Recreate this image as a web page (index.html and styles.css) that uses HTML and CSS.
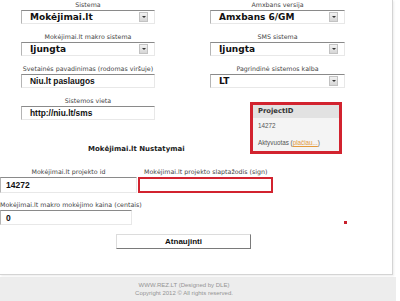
FILE: index.html
```html
<!DOCTYPE html>
<html lang="lt">
<head>
  <meta charset="UTF-8">
  <title>Mokėjimai.lt nustatymai</title>
  <link rel="stylesheet" href="styles.css">
</head>
<body>

  <div class="panel">
    <div class="settings">
      <div class="field">
        <div class="label">Sistema</div>
        <div class="select"><span>Mokėjimai.lt</span><i class="arrow"></i></div>
      </div>
      <div class="field">
        <div class="label">Amxbans versija</div>
        <div class="select"><span>Amxbans 6/GM</span><i class="arrow"></i></div>
      </div>

      <div class="field">
        <div class="label">Mokėjimai.lt makro sistema</div>
        <div class="select"><span>Įjungta</span><i class="arrow"></i></div>
      </div>
      <div class="field">
        <div class="label">SMS sistema</div>
        <div class="select"><span>Įjungta</span><i class="arrow"></i></div>
      </div>

      <div class="field">
        <div class="label">Svetainės pavadinimas (rodomas viršuje)</div>
        <div class="input">Niu.lt paslaugos</div>
      </div>
      <div class="field">
        <div class="label">Pagrindinė sistemos kalba</div>
        <div class="select"><span>LT</span><i class="arrow"></i></div>
      </div>

      <div class="field">
        <div class="label">Sistemos vieta</div>
        <div class="input">http://niu.lt/sms</div>
      </div>
      <div class="project">
        <div class="project-head">ProjectID</div>
        <p class="project-id">14272</p>
        <p class="project-state">Aktyvuotas (<a href="#">plačiau...</a>)</p>
      </div>

      <h3 class="heading">Mokėjimai.lt Nustatymai</h3>
    </div>

    <div class="mokejimai">
      <div class="field">
        <div class="label">Mokėjimai.lt projekto id</div>
        <div class="input tall">14272</div>
      </div>
      <div class="field">
        <div class="label left">Mokėjimai.lt projekto slaptažodis (sign)</div>
        <div class="input tall invalid"></div>
      </div>
      <div class="field">
        <div class="label flush">Mokėjimai.lt makro mokėjimo kaina (centais)</div>
        <div class="input short">0</div>
      </div>
    </div>

    <button class="submit">Atnaujinti</button>
    <span class="dot"></span>
  </div>

  <div class="footer">
    WWW.REZ.LT (Designed by DLE)<br>
    Copyright 2012 © All rights reserved.
  </div>

</body>
</html>
```

FILE: styles.css
```css
body {
  margin: 0;
  width: 400px;
  height: 301px;
  overflow: hidden;
  background: #fff;
  color: #333;
  font-family: "DejaVu Sans", Verdana, sans-serif;
}

.panel {
  position: relative;
  width: 393px;
  height: 275px;
  box-sizing: border-box;
  border-right: 1px solid #d4d4d4;
  border-bottom: 1px solid #d4d4d4;
  box-shadow: 1px 1px 2px rgba(0, 0, 0, 0.08);
}

.settings {
  display: grid;
  grid-template-columns: 134px 135px;
  column-gap: 55px;
  row-gap: 8px;
  padding-left: 21px;
}

.label {
  height: 10px;
  font-size: 6.3px;
  line-height: 10px;
  text-align: center;
  white-space: nowrap;
  color: #444;
}

.label.left {
  text-align: left;
  padding-left: 6px;
}

.label.flush {
  text-align: left;
}

.select, .input {
  box-sizing: border-box;
  height: 14px;
  display: flex;
  align-items: center;
  padding-left: 8px;
  border-top: 1px solid #8a8a8a;
  border-left: 1px solid #b4b4b4;
  border-right: 1px solid #e8e8e8;
  border-bottom: 1px solid #e8e8e8;
  background: #fff;
  color: #111;
  font-weight: bold;
  white-space: nowrap;
}

.select {
  font-size: 9px;
}

.select span {
  flex: 1;
}

.arrow {
  box-sizing: border-box;
  width: 9px;
  height: 10px;
  margin-right: 6px;
  display: flex;
  align-items: center;
  justify-content: center;
  background: linear-gradient(#f2f2f2, #d6d6d6);
  border: 1px solid #c2c2c2;
}

.arrow::after {
  content: "";
  border-top: 2px solid #333;
  border-left: 2px solid transparent;
  border-right: 2px solid transparent;
}

.input {
  font-family: "Liberation Sans", Arial, sans-serif;
  font-size: 8.4px;
}

.input.tall {
  height: 16px;
  padding-left: 5px;
  font-size: 8.5px;
}

.input.short {
  width: 132px;
  height: 15px;
  padding-left: 5px;
  font-size: 8.5px;
}

.input.invalid {
  border: 2px solid #d2232f;
}

.project {
  grid-column: 2;
  grid-row: 4 / span 2;
  box-sizing: border-box;
  width: 92px;
  height: 52px;
  margin: 6px 0 0 40px;
  border: 3px solid #d2232f;
  background: #f4f4f4;
  font-family: "Liberation Sans", Arial, sans-serif;
  font-size: 6.3px;
  color: #555;
}

.project-head {
  height: 13px;
  padding-left: 5px;
  background: #e2e2e2;
  font-family: "DejaVu Sans", Verdana, sans-serif;
  font-size: 6.8px;
  font-weight: bold;
  line-height: 13px;
  color: #333;
}

.project p {
  margin: 0;
  padding-left: 5px;
  line-height: 10px;
}

.project-id {
  padding-top: 3px;
}

.project-state {
  padding-top: 7px;
}

.project a {
  color: #e39a3a;
}

.heading {
  grid-column: 1 / -1;
  grid-row: 5;
  margin: 0 0 0 67px;
  padding-top: 16px;
  font-size: 7px;
  line-height: 10px;
  color: #222;
}

.mokejimai {
  display: grid;
  grid-template-columns: 137px 135px;
  column-gap: 1px;
  row-gap: 7px;
  margin-top: 13px;
}

.submit {
  display: block;
  box-sizing: border-box;
  width: 135px;
  height: 15px;
  margin: 9px 0 0 116px;
  padding: 0;
  background: #fff;
  border: 1px solid;
  border-color: #dcdcdc #7a7a7a #7a7a7a #dcdcdc;
  font-family: "Liberation Sans", Arial, sans-serif;
  font-size: 8px;
  font-weight: bold;
  color: #111;
}

.dot {
  position: absolute;
  left: 344px;
  top: 221px;
  width: 3px;
  height: 3px;
  background: #c8202c;
}

.footer {
  width: 396px;
  height: 24px;
  margin-top: 2px;
  box-sizing: border-box;
  padding: 4px 28px 0 0;
  background: #ededed;
  text-align: center;
  font-family: "Liberation Sans", Arial, sans-serif;
  font-size: 6px;
  line-height: 8px;
  color: #949494;
}
```
